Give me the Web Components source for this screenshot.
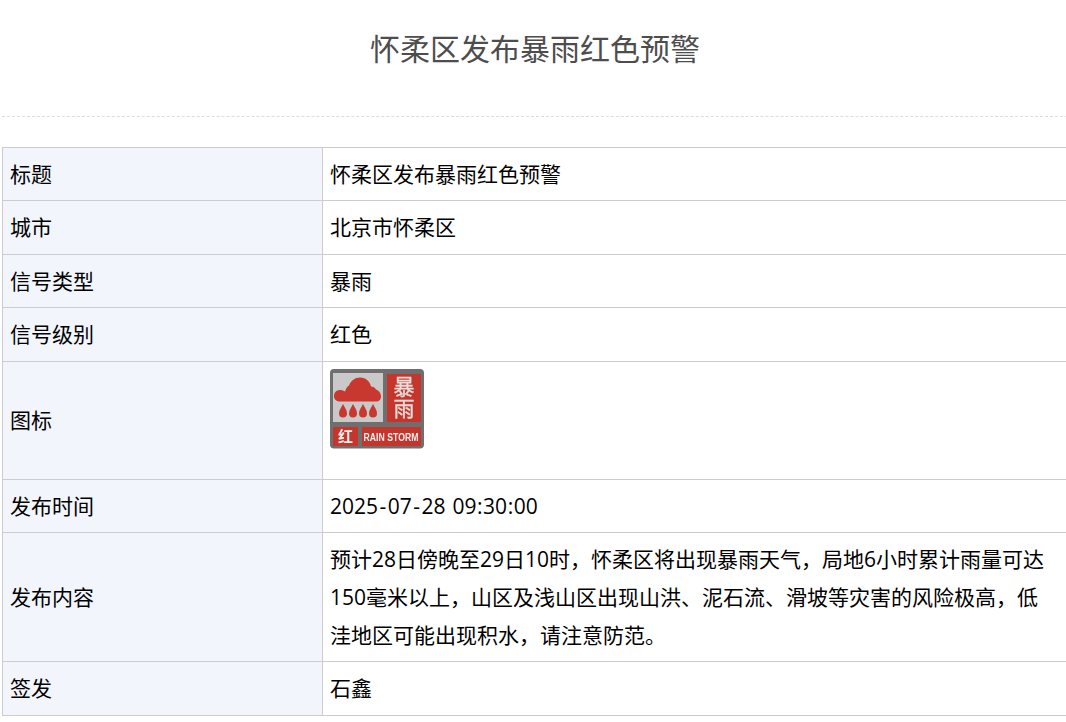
<!DOCTYPE html>
<html lang="zh-CN"><head><meta charset="utf-8"><title>怀柔区发布暴雨红色预警</title>
<style>
html,body{margin:0;padding:0;background:#fff;overflow:hidden;height:722px}
body{font-family:"Noto Sans CJK SC","Noto Sans",sans-serif;color:#000}
.h{padding:0 1.5px}.s{padding-right:1.5px}.c{padding:0 .5px}
</style></head><body>
<alert-page>
  <alert-heading slot="heading">怀柔区发布暴雨红色预警</alert-heading>
  <alert-table>
    <alert-row label="标题">怀柔区发布暴雨红色预警</alert-row>
    <alert-row label="城市">北京市怀柔区</alert-row>
    <alert-row label="信号类型">暴雨</alert-row>
    <alert-row label="信号级别">红色</alert-row>
    <alert-row label="图标"><signal-icon></signal-icon></alert-row>
    <alert-row label="发布时间">2025<span class="h">-</span>07<span class="h">-</span>28<span class="s"> </span>09<span class="c">:</span>30<span class="c">:</span>00</alert-row>
    <alert-row label="发布内容">预计28日傍晚至29日10时，怀柔区将出现暴雨天气，局地6小时累计雨量可达150毫米以上，山区及浅山区出现山洪、泥石流、滑坡等灾害的风险极高，低洼地区可能出现积水，请注意防范。</alert-row>
    <alert-row label="签发">石鑫</alert-row>
  </alert-table>
</alert-page>
<script>
function def(name, html){
  customElements.define(name, class extends HTMLElement{
    constructor(){super();this.attachShadow({mode:'open'}).innerHTML=html;}
    connectedCallback(){
      const l=this.shadowRoot.querySelector('[data-label]');
      if(l) l.textContent=this.getAttribute('label')||'';
    }
  });
}
def('alert-page',`<style>:host{display:block;width:1068px;padding:0 0 0 2px;box-sizing:border-box}</style><slot name="heading"></slot><slot></slot>`);
def('alert-heading',`<style>:host{display:block;height:117px;box-sizing:border-box;margin-bottom:30px;padding-top:24px;text-align:center;font-size:30px;line-height:47px;color:#4d4d4d;border-bottom:1px dashed #ddd}</style><slot></slot>`);
def('alert-table',`<style>:host{display:block;border-top:1px solid #ccc;border-left:1px solid #ccc}</style><slot></slot>`);
def('alert-row',`<style>
:host{display:grid;grid-template-columns:320px 1fr;font-size:21px;line-height:37.8px;font-family:"Open Sans","Noto Sans CJK SC",sans-serif}
.k,.v{border-bottom:1px solid #ccc;padding:7.95px 12px 6.75px 7px;box-sizing:border-box}
.k{background:#f2f5fc;border-right:1px solid #ccc;display:flex;align-items:center}
.v{display:block}
::slotted(signal-icon){margin-top:-.6px;margin-bottom:.6px}
</style><div class="k" data-label></div><div class="v"><slot></slot></div>`);
def('signal-icon',`<style>:host{display:block;width:96px;height:102.3px}svg{display:block}</style>
<svg width="96" height="81" viewBox="0 0 96 81" style="filter:blur(.4px)">
<rect x="0" y="0" width="94" height="79.5" rx="4" fill="#6f6f6f"/>
<rect x="3" y="4" width="50" height="49" fill="#c9c9c9"/>
<path d="M4 27c0-4 3-6 6-6 2 0 3 .5 5 1.500 1-3 2-5 4-6 2-5 6-8 11-8 6 0 10 4 11 9 2 0 4 1 5 3 3 1 5 4 5 7 0 3-2 5-5 5H10c-3 0-6-2-6-5z" fill="#c9382e"/>
<path d="M13 35c2 4 4 6 4 9.500a4 4 0 0 1-8 0c0-3.500 2-5.500 4-9.500zM23 35c2 4 4 6 4 9.500a4 4 0 0 1-8 0c0-3.500 2-5.500 4-9.500zM33 35c2 4 4 6 4 9.500a4 4 0 0 1-8 0c0-3.500 2-5.500 4-9.500zM43 35c2 4 4 6 4 9.500a4 4 0 0 1-8 0c0-3.500 2-5.500 4-9.500z" fill="#c9382e"/>
<rect x="57" y="5" width="34" height="48" fill="#c5352c"/>
<text x="74" y="7" font-size="21" letter-spacing="1" writing-mode="vertical-rl" dominant-baseline="central" fill="#e6dedc" stroke="#e6dedc" stroke-width=".35" font-family="Noto Sans CJK SC">暴雨</text>
<rect x="3" y="58" width="25" height="19" fill="#c5352c"/>
<text x="15.500" y="73" font-size="15" font-weight="700" text-anchor="middle" fill="#eee" font-family="Noto Sans CJK SC">红</text>
<rect x="32" y="58" width="59" height="19" fill="#c5352c"/>
<text transform="translate(61 71.500) scale(.79 1)" font-size="11" font-weight="700" text-anchor="middle" fill="#eee" font-family="Liberation Sans">RAIN STORM</text>
</svg>`);
</script>
</body></html>
